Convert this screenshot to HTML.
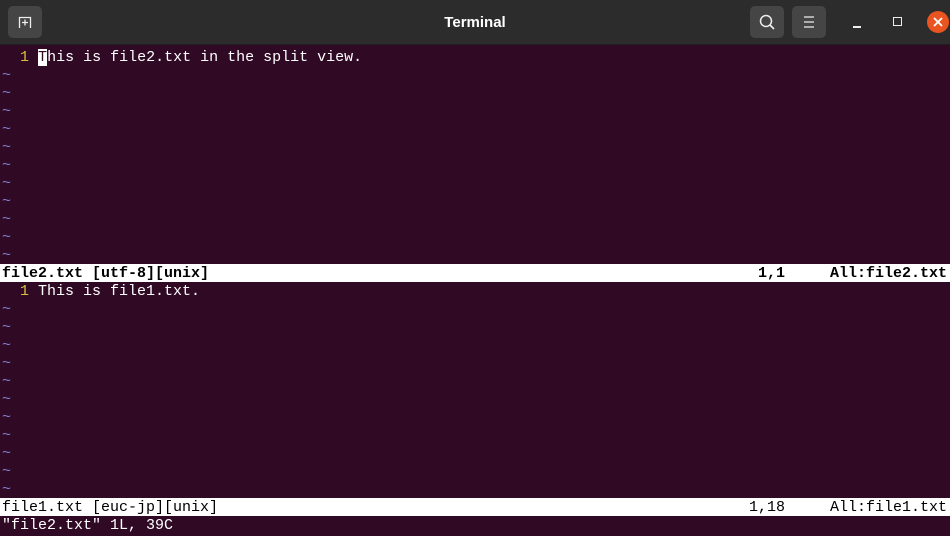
<!DOCTYPE html>
<html><head><style>
body{margin:0;width:950px;height:535px;background:#300a24;overflow:hidden;position:relative;font-family:"Liberation Mono",monospace;font-size:15px;color:#fff}
.tb{position:absolute;left:0;top:0;width:950px;height:45px;background:#2c2c2c;border-bottom:1px solid #1e1e1e;box-sizing:border-box}
.btn{position:absolute;top:6px;width:34px;height:32px;background:#454545;border-radius:5px}
.title{position:absolute;left:0;width:950px;top:14px;text-align:center;font:bold 15px "Liberation Sans",sans-serif;color:#fff}
.r{position:absolute;left:2px;height:18px;line-height:20px;white-space:pre}
.t{color:#7f7fcf}
.n{color:#d7c03a}
.st{position:absolute;left:0;width:950px;height:18px;line-height:19px;background:#fff;color:#000;white-space:pre}
.st span{position:absolute;top:0}
</style></head><body>
<div class="tb">
<div class="btn" style="left:8px"><svg width="34" height="32"><path d="M11.5 22V11.5h11V22" stroke="#eee" stroke-width="1.3" fill="none"/><path d="M17 13.5v6M14 16.5h6" stroke="#eee" stroke-width="1.3"/></svg></div>
<div class="title">Terminal</div>
<div class="btn" style="left:750px"><svg width="34" height="32"><circle cx="16" cy="15" r="5.5" stroke="#eee" stroke-width="1.5" fill="none"/><path d="M20 19l4 4" stroke="#eee" stroke-width="1.6"/></svg></div>
<div class="btn" style="left:792px"><svg width="34" height="32"><path d="M12 11h10M12 16h10M12 21h10" stroke="#eee" stroke-width="1.3"/></svg></div>
<div style="position:absolute;left:853px;top:26px;width:8px;height:1.5px;background:#eee"></div>
<div style="position:absolute;left:893px;top:17px;width:7px;height:7px;border:1.3px solid #eee"></div>
<div style="position:absolute;left:927px;top:11px;width:22px;height:22px;border-radius:50%;background:#e95420"><svg width="22" height="22"><path d="M7 7l8 8M15 7l-8 8" stroke="#fff" stroke-width="1.8"/></svg></div>
</div>
<div class="r" style="top:48px">  <span class="n">1</span> <span style="background:#fff;color:#300a24">T</span>his is file2.txt in the split view.</div>
<div class="r t" style="top:66px">~</div><div class="r t" style="top:84px">~</div><div class="r t" style="top:102px">~</div><div class="r t" style="top:120px">~</div><div class="r t" style="top:138px">~</div><div class="r t" style="top:156px">~</div><div class="r t" style="top:174px">~</div><div class="r t" style="top:192px">~</div><div class="r t" style="top:210px">~</div><div class="r t" style="top:228px">~</div><div class="r t" style="top:246px">~</div>
<div class="st" style="top:264px;font-weight:bold"><span style="left:2px">file2.txt [utf-8][unix]</span><span style="left:758px">1,1</span><span style="left:830px">All:file2.txt</span></div>
<div class="r" style="top:282px">  <span class="n">1</span> This is file1.txt.</div>
<div class="r t" style="top:300px">~</div><div class="r t" style="top:318px">~</div><div class="r t" style="top:336px">~</div><div class="r t" style="top:354px">~</div><div class="r t" style="top:372px">~</div><div class="r t" style="top:390px">~</div><div class="r t" style="top:408px">~</div><div class="r t" style="top:426px">~</div><div class="r t" style="top:444px">~</div><div class="r t" style="top:462px">~</div><div class="r t" style="top:480px">~</div>
<div class="st" style="top:498px"><span style="left:2px">file1.txt [euc-jp][unix]</span><span style="left:749px">1,18</span><span style="left:830px">All:file1.txt</span></div>
<div class="r" style="top:516px">"file2.txt" 1L, 39C</div>
</body></html>
